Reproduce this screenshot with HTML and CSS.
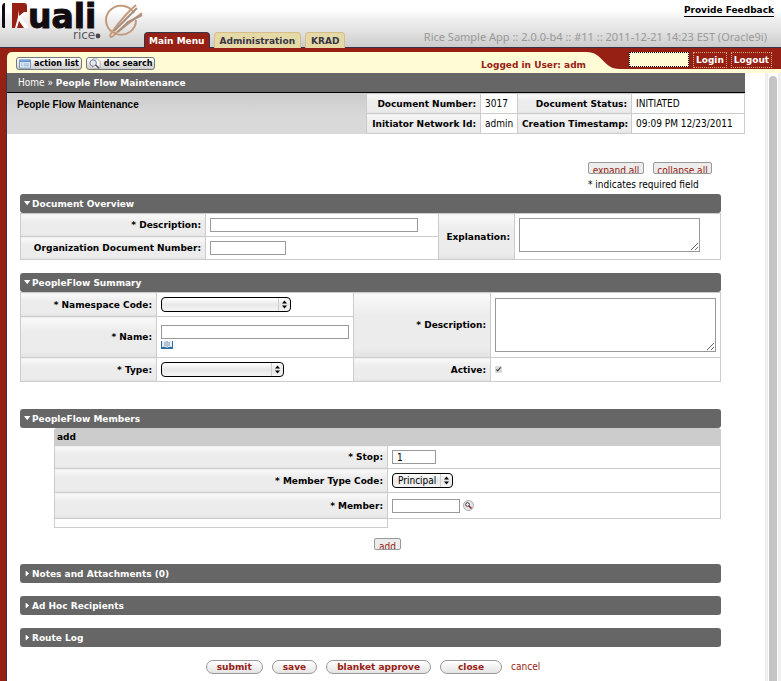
FILE: index.html
```html
<!DOCTYPE html>
<html lang="en">
<head>
<meta charset="utf-8">
<title>People Flow Maintenance</title>
<link rel="stylesheet" href="styles.css">
</head>
<body>
<header class="masthead">
  <svg class="logo" viewBox="0 0 146 46" width="146" height="46" role="img" aria-label="Kuali Rice">
    <path d="M2 27V7Q2 3 5 3V28H3Z" fill="#120c10"/>
    <path d="M12 3H24Q27 3 27 6V12L20 18L27 26V28H12Z" fill="#972014"/>
    <path d="M15 28L18 17V10L19 16L24 12H28V13L21 18L28 26V28H24L19 21L17 28Z" fill="#fff"/>
    <text class="logo-name" x="28" y="28">uali</text>
    <text class="logo-sub" x="73" y="39">rice</text>
    <circle cx="98" cy="36" r="2.4" fill="#4a464c"/>
    <g fill="none" stroke="#c49a7c" stroke-width="2">
      <path d="M134 13A15 14.500 0 1 0 136 20"/>
      <path d="M136 5Q126 13 112 32Q109 36 111 37Q113 37 116 33L142 13"/>
      <path d="M114 31L131 14L137 8M118 32L128 22L142 15" stroke="#a98f7e"/>
    </g>
  </svg>
  <nav class="tabs">
    <a class="tab tab-active" href="#main">Main Menu</a>
    <a class="tab" href="#admin">Administration</a>
    <a class="tab" href="#krad">KRAD</a>
  </nav>
  <div class="masthead-info">
    <a class="feedback" href="#feedback">Provide Feedback</a>
    <span class="build">Rice Sample App :: 2.0.0-b4 :: #11 :: 2011-12-21 14:23 EST (Oracle9i)</span>
  </div>
</header>
<div class="frame">
  <div class="userbar">
    <div class="userbar-left">
      <button class="tool" type="button"><svg width="12" height="10" viewBox="0 0 13 10"><path d="M.5.5h12v9H.5z" fill="#e8f0f8" stroke="#6b8fb5"/><path d="M1 1h11v2H1z" fill="#5d93cc"/><path d="M2 5h2M5 5h6M2 7h2M5 7h6" stroke="#86a9cc"/></svg>action list</button>
      <button class="tool" type="button"><svg width="12" height="11" viewBox="0 0 13 11"><path d="M4 .5h5l3 3v7H4z" fill="#fff" stroke="#aaa"/><circle cx="4.500" cy="5" r="3.500" fill="#dfeaf2" stroke="#778"/><path d="M7 7l4 3.500" stroke="#556" stroke-width="1.500"/></svg>doc search</button>
    </div>
    <span class="logged">Logged in User: adm</span>
    <svg class="swoop" width="34" height="17" viewBox="0 0 34 17"><path d="M0 0H34V17C16 17 18 0 0 0Z" fill="#972014"/></svg>
    <form class="login">
      <input class="login-user" type="text" aria-label="Backdoor user">
      <button class="login-btn" type="button">Login</button>
      <button class="login-btn" type="button">Logout</button>
    </form>
  </div>
  <div class="body-row">
    <main>
      <div class="top">
        <nav class="crumbs"><a href="#home">Home</a> » <b>People Flow Maintenance</b></nav>
        <div class="titlebar">
          <h1>People Flow Maintenance</h1>
          <table class="docinfo">
            <colgroup><col class="c114"><col class="c37"><col class="c114"><col class="c113"></colgroup>
            <tr><th scope="row">Document Number:</th><td>3017</td><th scope="row">Document Status:</th><td>INITIATED</td></tr>
            <tr><th scope="row">Initiator Network Id:</th><td>admin</td><th scope="row">Creation Timestamp:</th><td>09:09 PM 12/23/2011</td></tr>
          </table>
        </div>
      </div>
      <form class="content">
        <div class="expanders">
          <div class="expander-row"><button class="mini w56" type="button">expand all</button><button class="mini w59" type="button">collapse all</button></div>
          <div class="required-note">* indicates required field</div>
        </div>
        <section>
          <h2><button type="button"><i class="caret open"></i>Document Overview</button></h2>
          <table class="form overview">
            <colgroup><col class="c185"><col class="c233"><col class="c76"><col></colgroup>
            <tr><th><label for="desc">* Description:</label></th><td><input id="desc" class="w208" type="text"></td><th rowspan="2"><label for="expl">Explanation:</label></th><td rowspan="2"><textarea id="expl" class="short"></textarea></td></tr>
            <tr><th><label for="orgnum">Organization Document Number:</label></th><td><input id="orgnum" class="w76" type="text"></td></tr>
          </table>
        </section>
        <section class="summary-section">
          <h2><button type="button"><i class="caret open"></i>PeopleFlow Summary</button></h2>
          <table class="form summary">
            <colgroup><col class="c136"><col class="c197"><col class="c137"><col></colgroup>
            <tr class="r24"><th><label for="ns">* Namespace Code:</label></th><td><span class="pick w130"><select id="ns"><option></option></select><svg width="12" height="13" viewBox="0 0 12 13"><path d="M.5 0V13" stroke="#ccc"/><path d="M4 5.500L6.500 2.500L9 5.500ZM4 7.500H9L6.500 10.500Z"/></svg></span></td><th rowspan="2"><label for="pdesc">* Description:</label></th><td rowspan="2"><textarea id="pdesc" class="tall"></textarea></td></tr>
            <tr class="r41"><th><label for="name">* Name:</label></th><td><input id="name" class="w188" type="text"><svg class="book" width="12" height="10" viewBox="0 0 12 10"><path d="M0 1h12v8H0z" fill="#2f6ca8"/><path d="M1 1Q4 0 6 1.500Q8 0 11 1V7Q8 6 6 8Q4 6 1 7Z" fill="#e6eef6"/><path d="M6 1V8M3 3h2M7 3h2M3 5h2M7 5h2" stroke="#8496aa"/></svg></td></tr>
            <tr class="r24"><th><label for="type">* Type:</label></th><td><span class="pick w123"><select id="type"><option></option></select><svg width="12" height="13" viewBox="0 0 12 13"><path d="M.5 0V13" stroke="#ccc"/><path d="M4 5.500L6.500 2.500L9 5.500ZM4 7.500H9L6.500 10.500Z"/></svg></span></td><th><label for="active">Active:</label></th><td><input id="active" class="check" type="checkbox" checked></td></tr>
          </table>
        </section>
        <section class="members-section">
          <h2><button type="button"><i class="caret open"></i>PeopleFlow Members</button></h2>
          <div class="members-box">
            <h3>add</h3>
            <table class="form members">
              <colgroup><col class="half"><col></colgroup>
              <tr class="r23"><th><label for="stop">* Stop:</label></th><td><input id="stop" class="w44" type="text" value="1"></td></tr>
              <tr class="r24"><th><label for="mtype">* Member Type Code:</label></th><td><span class="pick w61"><select id="mtype"><option>Principal</option></select><svg width="12" height="13" viewBox="0 0 12 13"><path d="M.5 0V13" stroke="#ccc"/><path d="M4 5.500L6.500 2.500L9 5.500ZM4 7.500H9L6.500 10.500Z"/></svg></span></td></tr>
              <tr class="r26"><th><label for="member">* Member:</label></th><td><input id="member" class="w68" type="text"><button class="lookup" type="button" aria-label="Search member"><svg width="11" height="11" viewBox="0 0 11 11"><circle cx="5.500" cy="5.500" r="5" fill="#e6e6e6" stroke="#aaa"/><circle cx="4.500" cy="4.500" r="1.800" fill="#fff" stroke="#333"/><path d="M6 6l2.500 2.500" stroke="#822" stroke-width="1.500"/></svg></button></td></tr>
              <tr class="r9"><td></td><td class="blank"></td></tr>
            </table>
          </div>
          <div class="add-row"><button class="mini w27" type="button">add</button></div>
        </section>
        <section><h2><button type="button"><i class="caret"></i>Notes and Attachments (0)</button></h2></section>
        <section><h2><button type="button"><i class="caret"></i>Ad Hoc Recipients</button></h2></section>
        <section><h2><button type="button"><i class="caret"></i>Route Log</button></h2></section>
        <div class="actions">
          <button class="pill" type="button">submit</button>
          <button class="pill" type="button">save</button>
          <button class="pill" type="button">blanket approve</button>
          <button class="pill close" type="button">close</button>
          <a href="#cancel">cancel</a>
        </div>
      </form>
    </main>
    <div class="scroll"><div class="thumb"></div></div>
  </div>
</div>
</body>
</html>
```

FILE: styles.css
```css
* { box-sizing: border-box; }
html { overflow: hidden; }
body { margin: 0; font: 10px/12px "DejaVu Sans Condensed", "DejaVu Sans", sans-serif; color: #000; background: #fff; }
button, input, select, textarea { font: inherit; color: inherit; margin: 0; border-radius: 0; }
a { color: inherit; text-decoration: none; }
h1, h2, h3 { margin: 0; font: inherit; }
table { border-collapse: collapse; }
svg { flex: none; }
th, b, h2 button, h3, .tab, .feedback, .tool, .logged, .login-btn, .pill { font: bold 9px/12px "DejaVu Sans", sans-serif; }

.masthead { display: flex; height: 48px; border-bottom: 1px solid #363447; background: linear-gradient(#fff 22%, #eee 42%, #e6e6e6 60%, #ccc); }
.logo-name { font: bold 33px "DejaVu Sans", sans-serif; fill: #120c10; stroke: #120c10; stroke-width: 1px; }
.logo-sub { font: 12px "DejaVu Sans", sans-serif; fill: #5a565c; }
.tabs { display: flex; align-items: flex-end; gap: 4px; margin: 0 0 -1px -2px; }
.tab { height: 16px; padding: 2px 5px; border-radius: 4px 4px 0 0; border: 1px solid #d8bd8c; border-bottom: 0; background: #e5d9a6; color: #363447; }
.tab-active { padding: 2px 4px; border-color: #363447; background: #972014; color: #fff; }
.masthead-info { margin-left: auto; display: flex; flex-direction: column; align-items: flex-end; padding: 5px 7px 0 0; }
.feedback { border-bottom: 1px solid #000; line-height: 11px; }
.build { font: 11px/12px "Noto Sans", sans-serif; color: #999; margin: 14px 7px 0 0; }

.frame { background: #972014; padding-top: 4px; }
.userbar { display: flex; height: 21px; margin-left: 7px; background: #fffbd5; border-top-left-radius: 5px; }
.userbar-left { display: flex; gap: 4px; padding: 5px 0 0 9px; }
.tool { display: flex; align-items: center; gap: 3px; height: 13px; padding: 0 2px; border: 1px solid #777; border-radius: 3px; background: linear-gradient(#fff, #ccc); font-size: 8px; }
.logged { margin-left: auto; padding-top: 7px; color: #972014; }
.login { display: flex; gap: 4px; height: 17px; width: 161px; padding-left: 9px; background: #972014; }
.login-user { width: 60px; height: 15px; border: 1px dotted #000; background: #fffbd5; }
.login-btn { height: 16px; padding: 0 2px; border: 1px dotted #d8a878; background: #972014; color: #fff; }

.body-row { display: flex; margin-left: 6px; border-left: 1px solid #363447; background: #fff; min-height: calc(100vh - 73px); }
main { flex: 1; }
.top { margin-right: 20px; }
.crumbs { height: 20px; padding: 4px 11px; background: #666; border-bottom: 1px solid #000; color: #fff; }
.titlebar { display: flex; justify-content: space-between; height: 41px; background: linear-gradient(#ccc, #d9d9d9 60%); }
h1 { font: bold 10px/14px "Liberation Sans", sans-serif; padding: 5px 10px; }
.docinfo { table-layout: fixed; width: 378px; }
.docinfo th, .docinfo td { height: 20px; padding: 0 4px; border: 1px solid #ccc; background: #fff; white-space: nowrap; text-align: left; }
.docinfo th { text-align: right; }
.docinfo th, .form th { background: linear-gradient(#fafafa, #ececec 35%, #ececec 85%, #e2e2e2); }
.c114 { width: 114px; } .c37 { width: 37px; } .c113 { width: 113px; }

.content { display: flex; flex-direction: column; padding: 28px 44px 7px 13px; }
.expanders { align-self: flex-end; width: 133px; margin-bottom: 3px; }
.expander-row { display: flex; gap: 9px; margin-bottom: 5px; }
.mini { height: 12px; padding: 2px 0 0; overflow: hidden; border: 1px solid #999; border-radius: 2px; background: #ececec; color: #972014; white-space: nowrap; }
.w56 { width: 56px; } .w59 { width: 59px; } .w27 { width: 27px; }
section { margin-bottom: 13px; }
h2 { border-radius: 3px; background: #666; }
h2 button { display: flex; align-items: center; width: 100%; height: 19px; padding: 0 4px; border: 0; background: none; color: #fff; }
.caret { width: 8px; height: 6px; background: #fff; clip-path: polygon(20% 0, 65% 50%, 20% 100%); }
.caret.open { clip-path: polygon(0 10%, 80% 10%, 40% 80%); }
.form { width: 100%; table-layout: fixed; }
.form th, .form td { height: 23px; padding: 0 4px; border: 1px solid #ccc; text-align: left; }
.form th { text-align: right; }
.form tr.r24 > * { height: 24px; }
.form tr.r41 > * { height: 41px; }
.form tr.r26 > * { height: 26px; }
.form tr.r9 > * { height: 9px; }
.form td.blank { border-right: 0; border-bottom: 0; }
.c185 { width: 185px; } .c233 { width: 233px; } .c76 { width: 76px; }
.c136 { width: 136px; } .c197 { width: 197px; } .c137 { width: 137px; }
.half { width: 50%; }
.form input[type=text] { display: block; height: 14px; padding: 0 4px; border: 1px solid #999; background: #fff; }
.form .w208 { width: 208px; } .form .w76 { width: 76px; } .form .w188 { width: 188px; } .form .w44 { width: 44px; }
.form #member { display: inline-block; vertical-align: middle; width: 68px; }
textarea { display: block; border: 1px solid #999; background: #fff; }
.short { width: 181px; height: 34px; margin-bottom: 4px; }
.tall { width: 100%; height: 54px; }
.pick { position: relative; display: block; }
.w130 { width: 130px; } .w123 { width: 123px; } .w61 { width: 61px; }
.pick select { display: block; appearance: none; width: 100%; height: 15px; padding: 0 5px; border: 1px solid #000; border-radius: 4px; background: linear-gradient(#fff, #e8e8e8 50%, #f4f4f4); line-height: 12px; }
.pick svg { position: absolute; right: 1px; top: 1px; pointer-events: none; }
.book { display: block; margin-top: 1px; }
.check { display: block; width: 7px; height: 7px; accent-color: #ddd; }
.members-box { margin-left: 34px; }
h3 { height: 17px; padding: 3px; border-radius: 3px 3px 0 0; background: #ccc; font: bold 9px/12px "DejaVu Sans", sans-serif; }
.lookup { vertical-align: middle; margin-left: 3px; padding: 0; height: 11px; border: 0; background: none; }
.lookup svg { display: block; }
.summary-section { margin-bottom: 27px; }
.add-row { display: flex; justify-content: center; margin: 10px 0 1px 34px; }
.actions { display: flex; justify-content: center; align-items: center; gap: 9px; padding-left: 5px; }
.pill { height: 14px; padding: 0 10px; border: 1px solid #999; border-radius: 7px; background: linear-gradient(#fff, #e4e4e4); color: #972014; }
.close { padding: 0 17px; }
.actions a { color: #972014; }
.scroll { width: 16px; padding: 3px 0 0 1px; border-left: 3px solid #eee; border-right: 3px solid #eee; background: #fff; }
.thumb { width: 8px; height: 100%; border-radius: 4px 4px 0 0; background: #c4c4c4; }
```
